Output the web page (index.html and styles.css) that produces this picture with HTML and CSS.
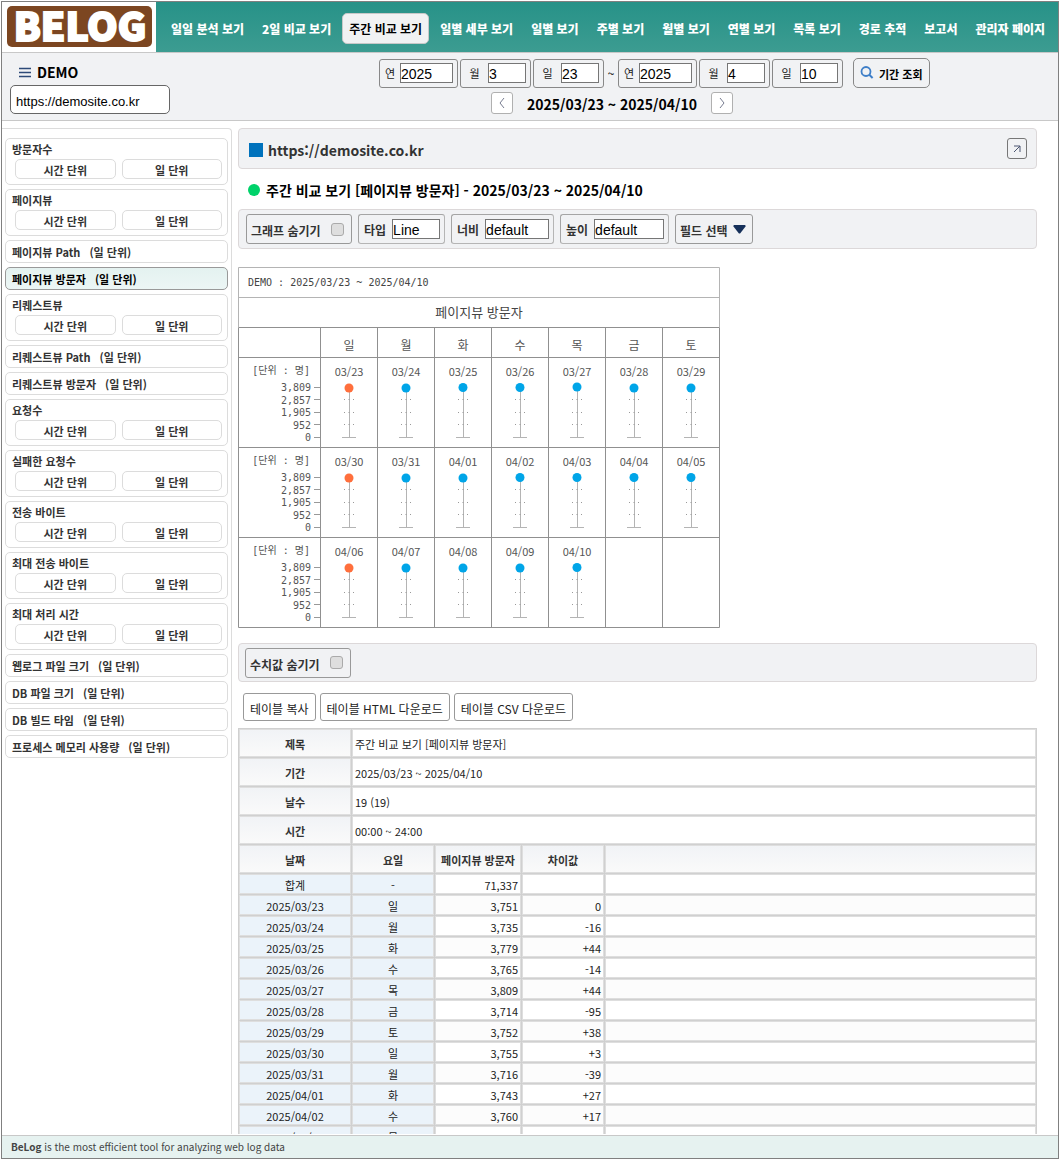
FILE: index.html
```html
<!DOCTYPE html>
<html lang="ko">
<head>
<meta charset="utf-8">
<meta name="viewport" content="width=device-width, initial-scale=1">
<title>BeLog</title>
<link rel="stylesheet" href="styles.css">
</head>
<body>
<div class="shell">
  <header class="topbar">
    <a class="logo" href="#">
      <svg width="145" height="41" viewBox="0 0 145 41" role="img" aria-label="BELOG">
        <rect width="145" height="41" rx="5" fill="#7c4621"/>
        <text class="logo-text" x="73" y="35" text-anchor="middle">BELOG</text>
      </svg>
    </a>
    <nav class="nav">
      <a href="#">일일 분석 보기</a>
      <a href="#">2일 비교 보기</a>
      <a href="#" class="active">주간 비교 보기</a>
      <a href="#">일별 세부 보기</a>
      <a href="#">일별 보기</a>
      <a href="#">주별 보기</a>
      <a href="#">월별 보기</a>
      <a href="#">연별 보기</a>
      <a href="#">목록 보기</a>
      <a href="#">경로 추적</a>
      <a href="#">보고서</a>
      <a href="#">관리자 페이지</a>
    </nav>
  </header>

  <div class="subbar">
    <div class="site">
      <div class="site-name">
        <svg width="12" height="11" viewBox="0 0 12 11" aria-hidden="true"><path d="M0 1.5h12M0 5.5h12M0 9.5h12" stroke="#2d4a78" stroke-width="1.5"/></svg>
        <span>DEMO</span>
      </div>
      <input class="site-input" type="text" value="https://demosite.co.kr" aria-label="사이트">
    </div>
    <form class="period">
      <div class="period-fields">
        <label class="date-field year"><span>연</span><input type="text" value="2025"></label>
        <label class="date-field"><span>월</span><input type="text" value="3"></label>
        <label class="date-field"><span>일</span><input type="text" value="23"></label>
        <span class="tilde">~</span>
        <label class="date-field year"><span>연</span><input type="text" value="2025"></label>
        <label class="date-field"><span>월</span><input type="text" value="4"></label>
        <label class="date-field"><span>일</span><input type="text" value="10"></label>
      </div>
      <button class="search" type="button">
        <svg width="14" height="14" viewBox="0 0 14 14" aria-hidden="true"><circle cx="6" cy="5.5" r="4.5" fill="none" stroke="#3f7fc8" stroke-width="1.8"/><path d="M9.3 8.8 12.6 12" stroke="#3f7fc8" stroke-width="2"/></svg>
        <span>기간 조회</span>
      </button>
      <div class="pager">
        <button type="button" aria-label="이전"><svg width="8" height="12" viewBox="0 0 8 12"><path d="M6 1 2 6l4 5" fill="none" stroke="#777c90"/></svg></button>
        <strong>2025/03/23 ~ 2025/04/10</strong>
        <button type="button" aria-label="다음"><svg width="8" height="12" viewBox="0 0 8 12"><path d="M2 1l4 5-4 5" fill="none" stroke="#777c90"/></svg></button>
      </div>
    </form>
  </div>

  <div class="body">
    <aside class="sidebar">
      <section class="group"><h3>방문자수</h3><div class="units"><button type="button">시간 단위</button><button type="button">일 단위</button></div></section>
      <section class="group"><h3>페이지뷰</h3><div class="units"><button type="button">시간 단위</button><button type="button">일 단위</button></div></section>
      <a class="single" href="#"><span>페이지뷰 Path</span><span>(일 단위)</span></a>
      <a class="single active" href="#"><span>페이지뷰 방문자</span><span>(일 단위)</span></a>
      <section class="group"><h3>리퀘스트뷰</h3><div class="units"><button type="button">시간 단위</button><button type="button">일 단위</button></div></section>
      <a class="single" href="#"><span>리퀘스트뷰 Path</span><span>(일 단위)</span></a>
      <a class="single" href="#"><span>리퀘스트뷰 방문자</span><span>(일 단위)</span></a>
      <section class="group"><h3>요청수</h3><div class="units"><button type="button">시간 단위</button><button type="button">일 단위</button></div></section>
      <section class="group"><h3>실패한 요청수</h3><div class="units"><button type="button">시간 단위</button><button type="button">일 단위</button></div></section>
      <section class="group"><h3>전송 바이트</h3><div class="units"><button type="button">시간 단위</button><button type="button">일 단위</button></div></section>
      <section class="group"><h3>최대 전송 바이트</h3><div class="units"><button type="button">시간 단위</button><button type="button">일 단위</button></div></section>
      <section class="group"><h3>최대 처리 시간</h3><div class="units"><button type="button">시간 단위</button><button type="button">일 단위</button></div></section>
      <a class="single" href="#"><span>웹로그 파일 크기</span><span>(일 단위)</span></a>
      <a class="single" href="#"><span>DB 파일 크기</span><span>(일 단위)</span></a>
      <a class="single" href="#"><span>DB 빌드 타임</span><span>(일 단위)</span></a>
      <a class="single" href="#"><span>프로세스 메모리 사용량</span><span>(일 단위)</span></a>
    </aside>

    <main class="main">
      <div class="panel site-panel">
        <span class="square"></span>
        <strong>https://demosite.co.kr</strong>
        <button class="open" type="button" aria-label="새 창"><svg width="8" height="8" viewBox="0 0 8 8"><path d="M1 7 7 1M1 1h6v6" fill="none" stroke="#4a5570"/></svg></button>
      </div>

      <h2 class="heading"><span class="circle"></span>주간 비교 보기 [페이지뷰 방문자] - 2025/03/23 ~ 2025/04/10</h2>

      <div class="panel toolbar">
        <label class="tool check"><span>그래프 숨기기</span><input type="checkbox"></label>
        <label class="tool field type"><span>타입</span><input type="text" value="Line"></label>
        <label class="tool field width"><span>너비</span><input type="text" value="default"></label>
        <label class="tool field height"><span>높이</span><input type="text" value="default"></label>
        <button class="tool pick" type="button"><span>필드 선택</span><svg width="13" height="9" viewBox="0 0 13 9" aria-hidden="true"><path d="M1 0h11q1 .5.5 1.5L7.500 8q-1 1-2 0L.5 1.500Q0 .5 1 0z" fill="#16305a"/></svg></button>
      </div>

      <svg class="chart" width="482" height="361" viewBox="0 0 482 361" role="img" aria-label="페이지뷰 방문자">
        <defs>
          <g id="stem">
            <path d="M.5 0V50" stroke="#b4b4b4"/>
            <path d="M-7 50.500H7" stroke="#b4b4b4"/>
            <path d="M-5 12.500h10M-5 25.500h10M-5 37.500h10" stroke="#999" stroke-dasharray="1 3.500"/>
          </g>
          <g id="axis">
            <g class="mono" text-anchor="end">
              <text x="72" y="17">[단위 : 명]</text>
              <text x="73" y="34">3,809</text>
              <text x="73" y="47">2,857</text>
              <text x="73" y="59">1,905</text>
              <text x="73" y="72">952</text>
              <text x="73" y="84">0</text>
            </g>
            <path d="M76 30.500h6M76 42.500h6M76 55.500h6M76 67.500h6M76 80.500h6" stroke="#999"/>
          </g>
        </defs>
        <path d="M.5 60V.5H481.500V60M0 30.500H482" fill="none" stroke="#b4b4b4"/>
        <path d="M.5 60.500H481.500V360.500H.5zM0 90.500H482M0 180.500H482M0 270.500H482M82.500 60V360M139.500 60V360M196.500 60V360M253.500 60V360M310.500 60V360M367.500 60V360M424.500 60V360" fill="none" stroke="#909090"/>
        <text class="mono dark" x="10" y="19">DEMO : 2025/03/23 ~ 2025/04/10</text>
        <text class="title" x="241" y="50" text-anchor="middle">페이지뷰 방문자</text>
        <g class="day" text-anchor="middle">
          <text x="111" y="83">일</text><text x="168" y="83">월</text><text x="225" y="83">화</text><text x="282" y="83">수</text><text x="339" y="83">목</text><text x="396" y="83">금</text><text x="453" y="83">토</text>
        </g>
        <g class="date" text-anchor="middle">
          <text x="111" y="109">03/23</text><text x="168" y="109">03/24</text><text x="225" y="109">03/25</text><text x="282" y="109">03/26</text><text x="339" y="109">03/27</text><text x="396" y="109">03/28</text><text x="453" y="109">03/29</text>
          <text x="111" y="199">03/30</text><text x="168" y="199">03/31</text><text x="225" y="199">04/01</text><text x="282" y="199">04/02</text><text x="339" y="199">04/03</text><text x="396" y="199">04/04</text><text x="453" y="199">04/05</text>
          <text x="111" y="289">04/06</text><text x="168" y="289">04/07</text><text x="225" y="289">04/08</text><text x="282" y="289">04/09</text><text x="339" y="289">04/10</text>
        </g>
        <use href="#axis" y="90"/><use href="#axis" y="180"/><use href="#axis" y="270"/>
        <use href="#stem" x="111" y="120"/><use href="#stem" x="168" y="120"/><use href="#stem" x="225" y="120"/><use href="#stem" x="282" y="120"/><use href="#stem" x="339" y="120"/><use href="#stem" x="396" y="120"/><use href="#stem" x="453" y="120"/>
        <use href="#stem" x="111" y="210"/><use href="#stem" x="168" y="210"/><use href="#stem" x="225" y="210"/><use href="#stem" x="282" y="210"/><use href="#stem" x="339" y="210"/><use href="#stem" x="396" y="210"/><use href="#stem" x="453" y="210"/>
        <use href="#stem" x="111" y="300"/><use href="#stem" x="168" y="300"/><use href="#stem" x="225" y="300"/><use href="#stem" x="282" y="300"/><use href="#stem" x="339" y="300"/>
        <g class="weekend"><circle cx="111" cy="121" r="4.500"/><circle cx="111" cy="211" r="4.500"/><circle cx="111" cy="301" r="4.500"/></g>
        <g class="weekday">
          <circle cx="168" cy="121" r="4.500"/><circle cx="225" cy="120.500" r="4.500"/><circle cx="282" cy="120.500" r="4.500"/><circle cx="339" cy="120" r="4.500"/><circle cx="396" cy="121" r="4.500"/><circle cx="453" cy="121" r="4.500"/>
          <circle cx="168" cy="211" r="4.500"/><circle cx="225" cy="211" r="4.500"/><circle cx="282" cy="210.500" r="4.500"/><circle cx="339" cy="210.500" r="4.500"/><circle cx="396" cy="210.500" r="4.500"/><circle cx="453" cy="210.500" r="4.500"/>
          <circle cx="168" cy="301" r="4.500"/><circle cx="225" cy="301" r="4.500"/><circle cx="282" cy="301" r="4.500"/><circle cx="339" cy="300.500" r="4.500"/>
        </g>
      </svg>

      <div class="panel values">
        <label class="tool check"><span>수치값 숨기기</span><input type="checkbox"></label>
      </div>

      <div class="actions">
        <button type="button">테이블 복사</button>
        <button type="button">테이블 HTML 다운로드</button>
        <button type="button">테이블 CSV 다운로드</button>
      </div>

      <table class="data">
        <colgroup><col class="c-date"><col class="c-day"><col class="c-value"><col class="c-diff"><col></colgroup>
        <tbody class="meta">
          <tr><th scope="row">제목</th><td colspan="4">주간 비교 보기 [페이지뷰 방문자]</td></tr>
          <tr><th scope="row">기간</th><td colspan="4">2025/03/23 ~ 2025/04/10</td></tr>
          <tr><th scope="row">날수</th><td colspan="4">19 (19)</td></tr>
          <tr><th scope="row">시간</th><td colspan="4">00:00 ~ 24:00</td></tr>
          <tr><th scope="col">날짜</th><th scope="col">요일</th><th scope="col">페이지뷰 방문자</th><th scope="col">차이값</th><th></th></tr>
        </tbody>
        <tbody class="rows">
          <tr><td>합계</td><td>-</td><td>71,337</td><td></td><td></td></tr>
          <tr><td>2025/03/23</td><td>일</td><td>3,751</td><td>0</td><td></td></tr>
          <tr><td>2025/03/24</td><td>월</td><td>3,735</td><td>-16</td><td></td></tr>
          <tr><td>2025/03/25</td><td>화</td><td>3,779</td><td>+44</td><td></td></tr>
          <tr><td>2025/03/26</td><td>수</td><td>3,765</td><td>-14</td><td></td></tr>
          <tr><td>2025/03/27</td><td>목</td><td>3,809</td><td>+44</td><td></td></tr>
          <tr><td>2025/03/28</td><td>금</td><td>3,714</td><td>-95</td><td></td></tr>
          <tr><td>2025/03/29</td><td>토</td><td>3,752</td><td>+38</td><td></td></tr>
          <tr><td>2025/03/30</td><td>일</td><td>3,755</td><td>+3</td><td></td></tr>
          <tr><td>2025/03/31</td><td>월</td><td>3,716</td><td>-39</td><td></td></tr>
          <tr><td>2025/04/01</td><td>화</td><td>3,743</td><td>+27</td><td></td></tr>
          <tr><td>2025/04/02</td><td>수</td><td>3,760</td><td>+17</td><td></td></tr>
          <tr><td>2025/04/03</td><td>목</td><td>3,757</td><td>-3</td><td></td></tr>
        </tbody>
      </table>
    </main>
  </div>

  <footer class="footer"><b>BeLog</b> is the most efficient tool for analyzing web log data</footer>
</div>
</body>
</html>
```

FILE: styles.css
```css
* { box-sizing: border-box; }

body {
  margin: 0;
  padding: 1px;
  height: 100vh;
  background: #fff;
  color: #222;
  font: 11px/20px "Noto Sans CJK KR", "Noto Sans", sans-serif;
}

h2, h3 { margin: 0; font-size: inherit; }
a { color: inherit; text-decoration: none; }
button, input { margin: 0; font: inherit; color: inherit; }
svg { display: block; flex: none; }

input[type="text"] {
  min-width: 0;
  height: 20px;
  padding: 2px 0 0;
  border: 1px solid #767676;
  background: #fff;
  color: #000;
  font: 14px/16px "Liberation Sans", Arial, sans-serif;
}

.shell {
  display: flex;
  flex-direction: column;
  height: 100%;
  border: 1px solid #808080;
}

/* top navigation */
.topbar {
  display: flex;
  height: 51px;
  flex: none;
  border-bottom: 1px solid #c8c8c8;
}
.logo { padding: 4px 4px 0 5px; }
.logo-text {
  font-size: 39px;
  font-weight: 900;
  fill: #fff;
  stroke: #fff;
  stroke-width: 2px;
}
.nav {
  display: flex;
  flex: 1;
  align-items: center;
  gap: 4px;
  padding: 3px 6px 0 8px;
  background: linear-gradient(#279288, #3c9c91);
  color: #fff;
  font-size: 12px;
  font-weight: 900;
  white-space: nowrap;
}
.nav a {
  padding: 5px 6px 4px;
  border: 1px solid transparent;
  border-radius: 5px;
}
.nav .active {
  border-color: #c8c8c8;
  background: #f1f2f3;
  color: #000;
  font-weight: 700;
}

/* site and period bar */
.subbar {
  display: flex;
  height: 68px;
  flex: none;
  border-bottom: 1px solid #c8c8c8;
  background: #f1f2f4;
}
.site { width: 377px; padding: 9px 8px 0; }
.site-name {
  display: flex;
  align-items: center;
  gap: 6px;
  height: 23px;
  padding: 0 9px 3px;
  color: #000;
  font-size: 14px;
  font-weight: 700;
}
input.site-input {
  display: block;
  width: 160px;
  height: 29px;
  padding: 3px 5px 0;
  border-color: #666;
  border-radius: 5px;
  font-size: 13px;
}
.period {
  display: grid;
  grid-template-columns: auto auto;
  column-gap: 10px;
  row-gap: 4px;
  align-content: start;
  padding-top: 5px;
}
.period-fields { display: flex; align-items: center; gap: 2px; }
.date-field {
  display: flex;
  align-items: center;
  width: 71px;
  height: 29px;
  padding-right: 4px;
  border: 1px solid #888;
  border-radius: 3px;
}
.date-field.year { width: 79px; }
.date-field span { width: 27px; text-align: center; }
.date-field.year span { width: 20px; }
.date-field input { flex: 1; }
.tilde { width: 10px; text-align: center; color: #000; font-size: 12px; }
.search {
  display: flex;
  align-items: center;
  gap: 5px;
  height: 30px;
  padding: 0 6px;
  border: 1px solid #888;
  border-radius: 5px;
  background: none;
  color: #000;
  font-weight: 700;
}
.search span { padding-top: 2px; }
.pager {
  display: flex;
  justify-content: center;
  align-items: center;
  gap: 14px;
  padding-left: 2px;
  color: #000;
  font-size: 14px;
}
.pager strong { padding-top: 2px; }
.pager button {
  display: grid;
  place-items: center;
  width: 22px;
  height: 22px;
  padding: 0;
  border: 1px solid #b0b0b0;
  border-radius: 3px;
  background: #fff;
}

/* sidebar */
.body { display: flex; flex: 1; min-height: 0; padding-bottom: 1px; }
.sidebar {
  display: flex;
  flex-direction: column;
  gap: 4px;
  width: 230px;
  flex: none;
  margin-top: 7px;
  padding: 9px 3px 0;
  border: solid #dcdcdc;
  border-width: 1px 1px 0 0;
  border-top-right-radius: 4px;
  color: #333;
  font-weight: 700;
}
.group, .single { border: 1px solid #dcdcdc; border-radius: 5px; }
.group { padding: 0 5px 5px 6px; }
.units {
  display: grid;
  grid-template-columns: 1fr 1fr;
  gap: 6px;
  padding-left: 3px;
}
.units button {
  height: 20px;
  padding: 3px 0 0;
  border: 1px solid #dcdcdc;
  border-radius: 5px;
  background: none;
  line-height: 15px;
}
.single { display: flex; gap: 9px; height: 23px; padding: 1px 6px 0; }
.single.active {
  border-color: #999;
  background: linear-gradient(#e4f2f0, #ecf6f5);
  color: #000;
}

/* main column */
.main {
  flex: 1;
  min-width: 0;
  padding: 7px 21px 0 6px;
  overflow-y: auto;
  scrollbar-width: none;
}
.panel {
  display: flex;
  align-items: center;
  border: 1px solid #dcd8d9;
  border-radius: 4px;
  background: #f1f2f4;
}
.site-panel {
  gap: 5px;
  height: 41px;
  padding: 0 9px 0 10px;
  color: #333;
  font-size: 14px;
}
.site-panel strong { flex: 1; padding-top: 3px; }
.square { width: 14px; height: 14px; margin-top: 3px; background: #0072bc; }
.open {
  display: grid;
  place-items: center;
  width: 20px;
  height: 21px;
  padding: 0;
  border: 1px solid #777;
  border-radius: 3px;
  background: none;
}
.heading {
  display: flex;
  align-items: center;
  gap: 6px;
  height: 40px;
  padding: 2px 10px 0;
  color: #000;
  font-size: 14px;
}
.circle { width: 12px; height: 12px; border-radius: 50%; background: #00d26a; }
.toolbar { gap: 6px; height: 40px; padding: 0 7px; }
.tool {
  display: flex;
  align-items: center;
  height: 30px;
  border: 1px solid #999;
  border-radius: 3px;
  background: none;
  color: #333;
  font-size: 12px;
  font-weight: 700;
}
.check { width: 106px; padding: 0 7px 0 4px; }
.check span { flex: 1; padding-top: 4px; }
.check input {
  appearance: none;
  width: 13px;
  height: 13px;
  border: 1px solid #aaa;
  border-radius: 3px;
  background: #dedede;
}
.field { gap: 6px; padding: 0 4px 0 5px; border-color: #a5a5a5 #b5b5b5 #b5b5b5 #a5a5a5; }
.field span { padding-top: 2px; }
.field input { flex: 1; }
.type { width: 87px; }
.width { width: 103px; }
.height { width: 109px; }
.pick { gap: 5px; padding: 0 6px 0 4px; }
.pick span { padding-top: 4px; }

.chart { margin-top: 18px; }
.chart text { fill: #555; }
.chart .mono { font: 10px "DejaVu Sans Mono", "Noto Sans CJK KR", monospace; }
.chart .dark { fill: #444; }
.chart .title { font-size: 13px; fill: #444; }
.chart .day { font-size: 12px; }
.chart .date { font-size: 11px; }
.weekend { fill: #ff6f3c; }
.weekday { fill: #00a5e8; }

.values { height: 39px; margin-top: 15px; padding: 0 6px; }
.actions { display: flex; gap: 4px; margin: 11px 0 7px 5px; }
.actions button {
  height: 28px;
  padding: 4px 6px 0;
  border: 1px solid #999;
  border-radius: 3px;
  background: #fff;
  color: #222;
  font-size: 12px;
}

/* data table */
.data {
  width: 100%;
  table-layout: fixed;
  border-spacing: 1px;
  background: #d0d0d0;
}
.c-date { width: 112px; }
.c-day { width: 82px; }
.c-value { width: 86px; }
.c-diff { width: 82px; }
.data th, .data td {
  padding: 2px 2px 0;
  border: 1px solid #dedede;
  background: #fff;
  line-height: 16px;
}
.meta th, .meta td { height: 28px; }
.meta th { background: linear-gradient(#f1f3f6, #fafafa); color: #333; }
.rows td { height: 20px; text-align: right; }
.rows tr:nth-child(even) td { background: #fcfcfc; }
.rows tr td:nth-child(-n+2) { background: #ebf3fa; text-align: center; }

.footer {
  height: 23px;
  flex: none;
  padding: 1px 9px 0;
  border-top: 1px solid #c8c8c8;
  background: #e6f2f0;
  color: #444;
  font-size: 10px;
}
```
